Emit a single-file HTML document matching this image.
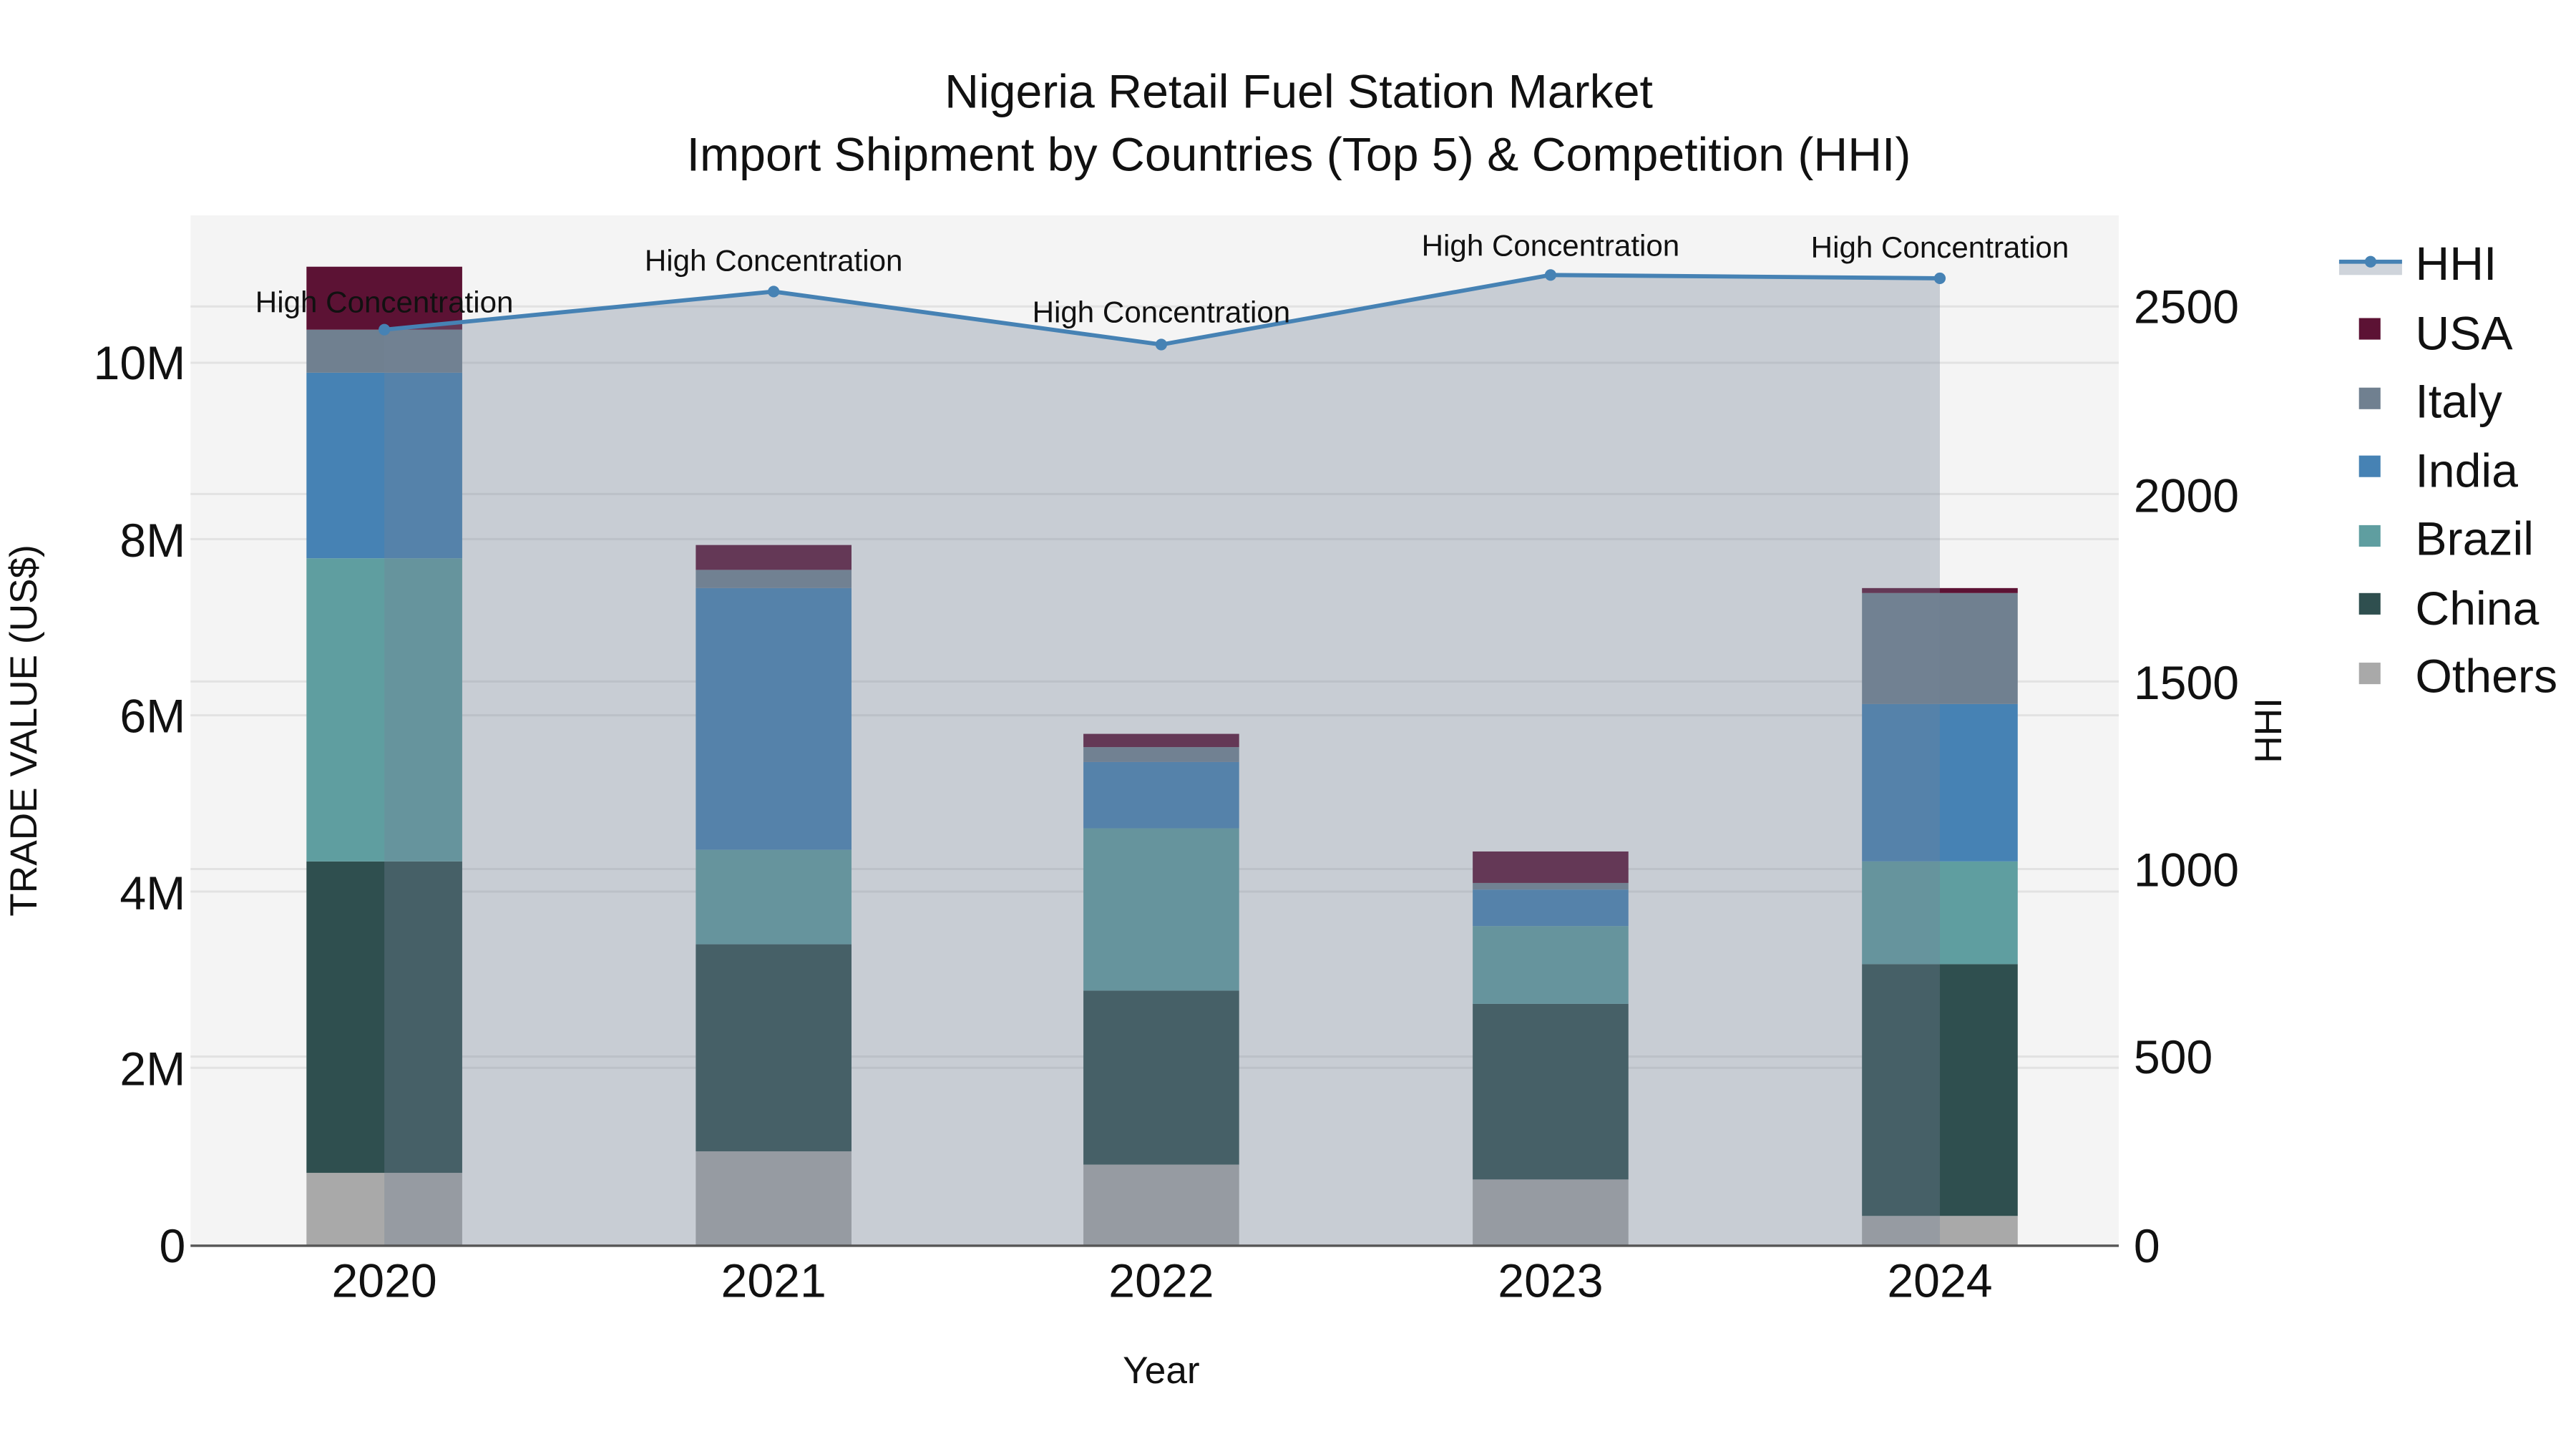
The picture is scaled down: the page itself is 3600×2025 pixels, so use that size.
<!DOCTYPE html>
<html><head><meta charset="utf-8"><style>html,body{margin:0;padding:0;background:#fff}svg{display:block}text{font-family:"Liberation Sans",Arial,sans-serif;fill:#111}</style></head>
<body>
<svg width="3600" height="2025" viewBox="0 0 1555 874.7" xmlns="http://www.w3.org/2000/svg">
<rect x="0" y="0" width="1555" height="875" fill="#fff"/>
<rect x="115" y="130" width="1164" height="622" fill="#f4f4f4"/>
<g stroke="#e2e2e2" stroke-width="1.3">
<line x1="115" x2="1279" y1="644.6" y2="644.6"/><line x1="115" x2="1279" y1="538.2" y2="538.2"/>
<line x1="115" x2="1279" y1="431.8" y2="431.8"/><line x1="115" x2="1279" y1="325.4" y2="325.4"/>
<line x1="115" x2="1279" y1="219" y2="219"/>
<line x1="115" x2="1279" y1="637.8" y2="637.8"/><line x1="115" x2="1279" y1="524.6" y2="524.6"/>
<line x1="115" x2="1279" y1="411.4" y2="411.4"/><line x1="115" x2="1279" y1="298.2" y2="298.2"/>
<line x1="115" x2="1279" y1="185" y2="185"/>
</g>
<g>
<rect x="185" y="708" width="94" height="44" fill="#a9a9a9"/><rect x="185" y="520" width="94" height="188" fill="#2f4f4f"/><rect x="185" y="337" width="94" height="183" fill="#5f9ea0"/><rect x="185" y="225" width="94" height="112" fill="#4682b4"/><rect x="185" y="199" width="94" height="26" fill="#708090"/><rect x="185" y="161" width="94" height="38" fill="#5c1234"/>
<rect x="420" y="695" width="94" height="57" fill="#a9a9a9"/><rect x="420" y="570" width="94" height="125" fill="#2f4f4f"/><rect x="420" y="513" width="94" height="57" fill="#5f9ea0"/><rect x="420" y="355" width="94" height="158" fill="#4682b4"/><rect x="420" y="344" width="94" height="11" fill="#708090"/><rect x="420" y="329" width="94" height="15" fill="#5c1234"/>
<rect x="654" y="703" width="94" height="49" fill="#a9a9a9"/><rect x="654" y="598" width="94" height="105" fill="#2f4f4f"/><rect x="654" y="500" width="94" height="98" fill="#5f9ea0"/><rect x="654" y="460" width="94" height="40" fill="#4682b4"/><rect x="654" y="451" width="94" height="9" fill="#708090"/><rect x="654" y="443" width="94" height="8" fill="#5c1234"/>
<rect x="889" y="712" width="94" height="40" fill="#a9a9a9"/><rect x="889" y="606" width="94" height="106" fill="#2f4f4f"/><rect x="889" y="559" width="94" height="47" fill="#5f9ea0"/><rect x="889" y="537" width="94" height="22" fill="#4682b4"/><rect x="889" y="533" width="94" height="4" fill="#708090"/><rect x="889" y="514" width="94" height="19" fill="#5c1234"/>
<rect x="1124" y="734" width="94" height="18" fill="#a9a9a9"/><rect x="1124" y="582" width="94" height="152" fill="#2f4f4f"/><rect x="1124" y="520" width="94" height="62" fill="#5f9ea0"/><rect x="1124" y="425" width="94" height="95" fill="#4682b4"/><rect x="1124" y="358" width="94" height="67" fill="#708090"/><rect x="1124" y="355" width="94" height="3" fill="#5c1234"/>
</g>
<polygon points="232,199 467,176 701,208 936,166 1171,168 1171,752 232,752" fill="rgb(117,131,151)" fill-opacity="0.345"/>
<line x1="115" x2="1279" y1="752" y2="752" stroke="#555" stroke-width="1.5"/>
<polyline points="232,199 467,176 701,208 936,166 1171,168" fill="none" stroke="#4682b4" stroke-width="2.5"/>
<g fill="#4682b4"><circle cx="232" cy="199" r="3.5"/><circle cx="467" cy="176" r="3.5"/><circle cx="701" cy="208" r="3.5"/><circle cx="936" cy="166" r="3.5"/><circle cx="1171" cy="168" r="3.5"/></g>
<g font-size="18.2" text-anchor="middle">
<text x="232" y="188.5">High Concentration</text><text x="467" y="163.5">High Concentration</text><text x="701" y="194.5">High Concentration</text><text x="936" y="154.5">High Concentration</text><text x="1171" y="155.5">High Concentration</text>
</g>
<g text-anchor="middle" font-size="28.6">
<text x="784" y="65">Nigeria Retail Fuel Station Market</text>
<text x="784" y="103">Import Shipment by Countries (Top 5) &amp; Competition (HHI)</text>
</g>
<g font-size="28.6" text-anchor="end">
<text x="112" y="762">0</text><text x="112" y="655">2M</text><text x="112" y="549">4M</text><text x="112" y="442">6M</text><text x="112" y="336">8M</text><text x="112" y="229">10M</text>
</g>
<g font-size="28.6" text-anchor="start">
<text x="1288" y="762">0</text><text x="1288" y="648">500</text><text x="1288" y="535">1000</text><text x="1288" y="422">1500</text><text x="1288" y="309">2000</text><text x="1288" y="195">2500</text>
</g>
<g font-size="28.6" text-anchor="middle">
<text x="232" y="783">2020</text><text x="467" y="783">2021</text><text x="701" y="783">2022</text><text x="936" y="783">2023</text><text x="1171" y="783">2024</text>
</g>
<text x="701" y="835" font-size="23" text-anchor="middle">Year</text>
<text transform="translate(22,441) rotate(-90)" font-size="23" text-anchor="middle">TRADE VALUE (US$)</text>
<text transform="translate(1377,441) rotate(-90)" font-size="23" text-anchor="middle">HHI</text>
<rect x="1412" y="158" width="38" height="8" fill="rgb(117,131,151)" fill-opacity="0.345"/>
<line x1="1412" x2="1450" y1="158" y2="158" stroke="#4682b4" stroke-width="2.5"/>
<circle cx="1431" cy="158" r="3.5" fill="#4682b4"/>
<rect x="1424" y="192" width="13" height="13" fill="#5c1234"/>
<rect x="1424" y="234" width="13" height="13" fill="#708090"/>
<rect x="1424" y="275" width="13" height="13" fill="#4682b4"/>
<rect x="1424" y="317" width="13" height="13" fill="#5f9ea0"/>
<rect x="1424" y="358" width="13" height="13" fill="#2f4f4f"/>
<rect x="1424" y="400" width="13" height="13" fill="#a9a9a9"/>
<g font-size="28.6">
<text x="1458" y="169">HHI</text><text x="1458" y="211">USA</text><text x="1458" y="252">Italy</text><text x="1458" y="294">India</text><text x="1458" y="335">Brazil</text><text x="1458" y="377">China</text><text x="1458" y="418">Others</text>
</g>
</svg>
</body></html>
